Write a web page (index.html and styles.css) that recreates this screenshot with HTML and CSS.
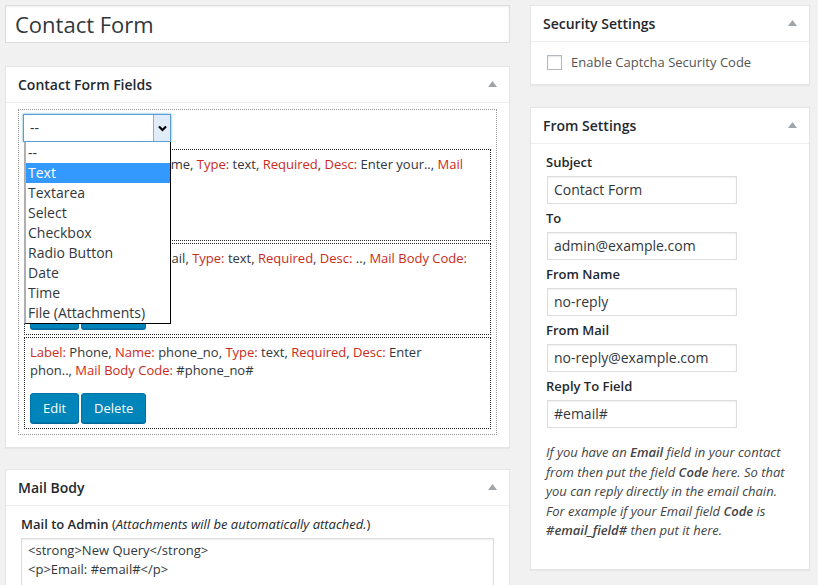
FILE: index.html
```html
<!DOCTYPE html>
<html>
<head>
<meta charset="utf-8">
<link rel="stylesheet" href="styles.css">
</head>
<body>
<div class="wrap">
  <div class="col-main">
    <div class="title-input">Contact Form</div>

    <div class="postbox fields-box">
      <div class="hndle"><h2>Contact Form Fields</h2><span class="toggle"><svg width="9" height="6" viewBox="0 0 9 6"><polygon points="4.5,0 9,6 0,6" fill="#a0a5aa"/></svg></span></div>
      <div class="inside">
        <div class="field-list">
          <div class="select-wrap">
            <div class="select"><span class="select-val">--</span><span class="select-arrow"><svg width="9" height="7" viewBox="0 0 9 7"><path d="M1 1.5 L4.5 5 L8 1.5" fill="none" stroke="#000" stroke-width="2.2"/></svg></span></div>
            <ul class="dropdown">
              <li>--</li>
              <li class="active">Text</li>
              <li>Textarea</li>
              <li>Select</li>
              <li>Checkbox</li>
              <li>Radio Button</li>
              <li>Date</li>
              <li>Time</li>
              <li>File (Attachments)</li>
            </ul>
          </div>

          <div class="field-item">
            <p class="desc"><span class="k">Label:</span> Name, <span class="k">Name:</span> name, <span class="k">Type:</span> text, <span class="k">Required</span>, <span class="k">Desc:</span> Enter your.., <span class="k">Mail Body Code:</span> #name#</p>
            <div class="actions"><span class="btn">Edit</span><span class="btn">Delete</span></div>
          </div>
          <div class="field-item">
            <p class="desc"><span class="k">Label:</span> Email, <span class="k">Name:</span> email, <span class="k">Type:</span> text, <span class="k">Required</span>, <span class="k">Desc:</span> .., <span class="k">Mail Body Code:</span> #email#</p>
            <div class="actions"><span class="btn">Edit</span><span class="btn">Delete</span></div>
          </div>
          <div class="field-item">
            <p class="desc"><span class="k">Label:</span> Phone, <span class="k">Name:</span> phone_no, <span class="k">Type:</span> text, <span class="k">Required</span>, <span class="k">Desc:</span> Enter<br>phon.., <span class="k">Mail Body Code:</span> #phone_no#</p>
            <div class="actions"><span class="btn">Edit</span><span class="btn">Delete</span></div>
          </div>
        </div>
      </div>
    </div>

    <div class="postbox mail-box">
      <div class="hndle"><h2>Mail Body</h2><span class="toggle"><svg width="9" height="6" viewBox="0 0 9 6"><polygon points="4.5,0 9,6 0,6" fill="#a0a5aa"/></svg></span></div>
      <div class="inside mail-inside">
        <div class="mail-label"><b>Mail to Admin</b> (<i>Attachments will be automatically attached.</i>)</div>
        <div class="textarea">&lt;strong&gt;New Query&lt;/strong&gt;<br>&lt;p&gt;Email: #email#&lt;/p&gt;</div>
      </div>
    </div>
  </div>

  <div class="col-side">
    <div class="postbox">
      <div class="hndle"><h2>Security Settings</h2><span class="toggle"><svg width="9" height="6" viewBox="0 0 9 6"><polygon points="4.5,0 9,6 0,6" fill="#a0a5aa"/></svg></span></div>
      <div class="inside sec-inside">
        <label class="check"><span class="checkbox"></span>Enable Captcha Security Code</label>
      </div>
    </div>

    <div class="postbox">
      <div class="hndle"><h2>From Settings</h2><span class="toggle"><svg width="9" height="6" viewBox="0 0 9 6"><polygon points="4.5,0 9,6 0,6" fill="#a0a5aa"/></svg></span></div>
      <div class="inside from-inside">
        <div class="flabel">Subject</div>
        <div class="finput">Contact Form</div>
        <div class="flabel">To</div>
        <div class="finput">admin@example.com</div>
        <div class="flabel">From Name</div>
        <div class="finput">no-reply</div>
        <div class="flabel">From Mail</div>
        <div class="finput">no-reply@example.com</div>
        <div class="flabel">Reply To Field</div>
        <div class="finput">#email#</div>
        <p class="note">If you have an <b>Email</b> field in your contact<br>from then put the field <b>Code</b> here. So that<br>you can reply directly in the email chain.<br>For example if your Email field <b>Code</b> is<br><b>#email_field#</b> then put it here.</p>
      </div>
    </div>
  </div>
</div>
</body>
</html>
```
FILE: styles.css
```css
html, body {
  margin: 0;
  padding: 0;
}
body {
  background: #f1f1f1;
  font-family: "Open Sans", "Noto Sans", sans-serif;
  font-size: 13px;
  line-height: 18px;
  color: #444;
  overflow: hidden;
  height: 585px;
}
.wrap {
  display: flex;
  align-items: flex-start;
  gap: 20px;
  padding: 5px 0 0 5px;
}
.col-main {
  width: 505px;
  display: flex;
  flex-direction: column;
}
.col-side {
  width: 280px;
  display: flex;
  flex-direction: column;
  gap: 22px;
}
.title-input {
  height: 38px;
  box-sizing: border-box;
  background: #fff;
  border: 1px solid #ddd;
  box-shadow: inset 0 1px 2px rgba(0,0,0,.07);
  font-size: 22px;
  line-height: 36px;
  padding: 0 9px;
  color: #32373c;
  margin-bottom: 23px;
}
.postbox {
  background: #fff;
  border: 1px solid #e5e5e5;
  box-shadow: 0 1px 1px rgba(0,0,0,.04);
}
.fields-box {
  margin-bottom: 21px;
}
.hndle {
  height: 35px;
  border-bottom: 1px solid #eee;
  display: flex;
  align-items: center;
  justify-content: space-between;
  padding: 0 12px;
}
.hndle h2 {
  margin: 0;
  font-size: 14px;
  font-weight: 600;
  color: #23282d;
  line-height: 18px;
}
.toggle {
  display: flex;
  padding-bottom: 1px;
}
.inside {
  padding: 6px 12px 12px;
}
.field-list {
  border: 1px dotted #999;
  padding: 4px 5px 5px;
}
.select-wrap {
  position: relative;
  width: 148px;
  margin-left: -1px;
  margin-bottom: 7px;
}
.select {
  height: 28px;
  box-sizing: border-box;
  border: 1px solid #5b9dd9;
  box-shadow: 0 0 2px rgba(30,140,190,.8);
  display: flex;
  align-items: center;
  justify-content: space-between;
  background: #fff;
}
.select-val {
  padding-left: 6px;
  font-size: 14px;
  color: #32373c;
}
.select-arrow {
  width: 17px;
  height: 26px;
  box-sizing: border-box;
  border-left: 1px solid #7eb4ea;
  background: #e1ecf9;
  display: flex;
  align-items: center;
  justify-content: center;
}
.dropdown {
  position: absolute;
  top: 28px;
  left: 1px;
  width: 147px;
  box-sizing: border-box;
  margin: 0;
  padding: 1px 0 0;
  list-style: none;
  background: #fff;
  border-left: 2px solid #b0b0b0;
  border-right: 1px solid #000;
  border-bottom: 1px solid #000;
  z-index: 5;
}
.dropdown li {
  height: 20px;
  line-height: 20px;
  font-size: 14px;
  padding-left: 2px;
  color: #32373c;
}
.dropdown li.active {
  background: #3399ff;
  color: #fff;
}
.field-item {
  border: 1px dotted #222;
  padding: 5px;
  margin-bottom: 2px;
}
.field-item:last-child {
  margin-bottom: 0;
}
.desc {
  margin: 0 0 14px;
  color: #32373c;
  line-height: 18px;
}
.k {
  color: #cc2a1a;
}
.actions {
  display: flex;
  gap: 2px;
}
.btn {
  display: inline-block;
  height: 30px;
  box-sizing: border-box;
  padding: 0 12px;
  line-height: 28px;
  background: #0085ba;
  border: 1px solid #0073aa;
  border-radius: 3px;
  box-shadow: 0 1px 0 #006799;
  color: #fff;
  font-size: 13px;
}
.mail-inside {
  padding: 9px 15px 12px;
}
.mail-label {
  color: #23282d;
  margin-bottom: 5px;
}
.mail-label b {
  font-weight: 600;
}
.textarea {
  border: 1px solid #ddd;
  box-shadow: inset 0 1px 2px rgba(0,0,0,.07);
  padding: 2px 6px;
  line-height: 19px;
  font-size: 13px;
  color: #32373c;
  height: 100px;
}
.sec-inside {
  padding: 11px 16px 13px;
}
.check {
  display: flex;
  align-items: center;
  color: #555;
}
.checkbox {
  width: 13px;
  height: 13px;
  border: 1px solid #b4b9be;
  box-shadow: inset 0 1px 2px rgba(0,0,0,.1);
  background: #fff;
  margin-right: 9px;
  margin-top: 1px;
}
.from-inside {
  padding: 9px 15px 14px;
}
.flabel {
  font-weight: 600;
  color: #23282d;
  line-height: 18px;
  margin-bottom: 5px;
}
.finput {
  width: 190px;
  height: 28px;
  box-sizing: border-box;
  border: 1px solid #ddd;
  box-shadow: inset 0 1px 2px rgba(0,0,0,.07);
  font-size: 14px;
  line-height: 26px;
  padding: 0 6px;
  color: #32373c;
  margin-left: 1px;
  margin-bottom: 5px;
}
.note {
  margin: 15px 0 14px;
  font-style: italic;
  line-height: 19.5px;
  color: #444;
}
.note b {
  font-weight: 600;
}
```
